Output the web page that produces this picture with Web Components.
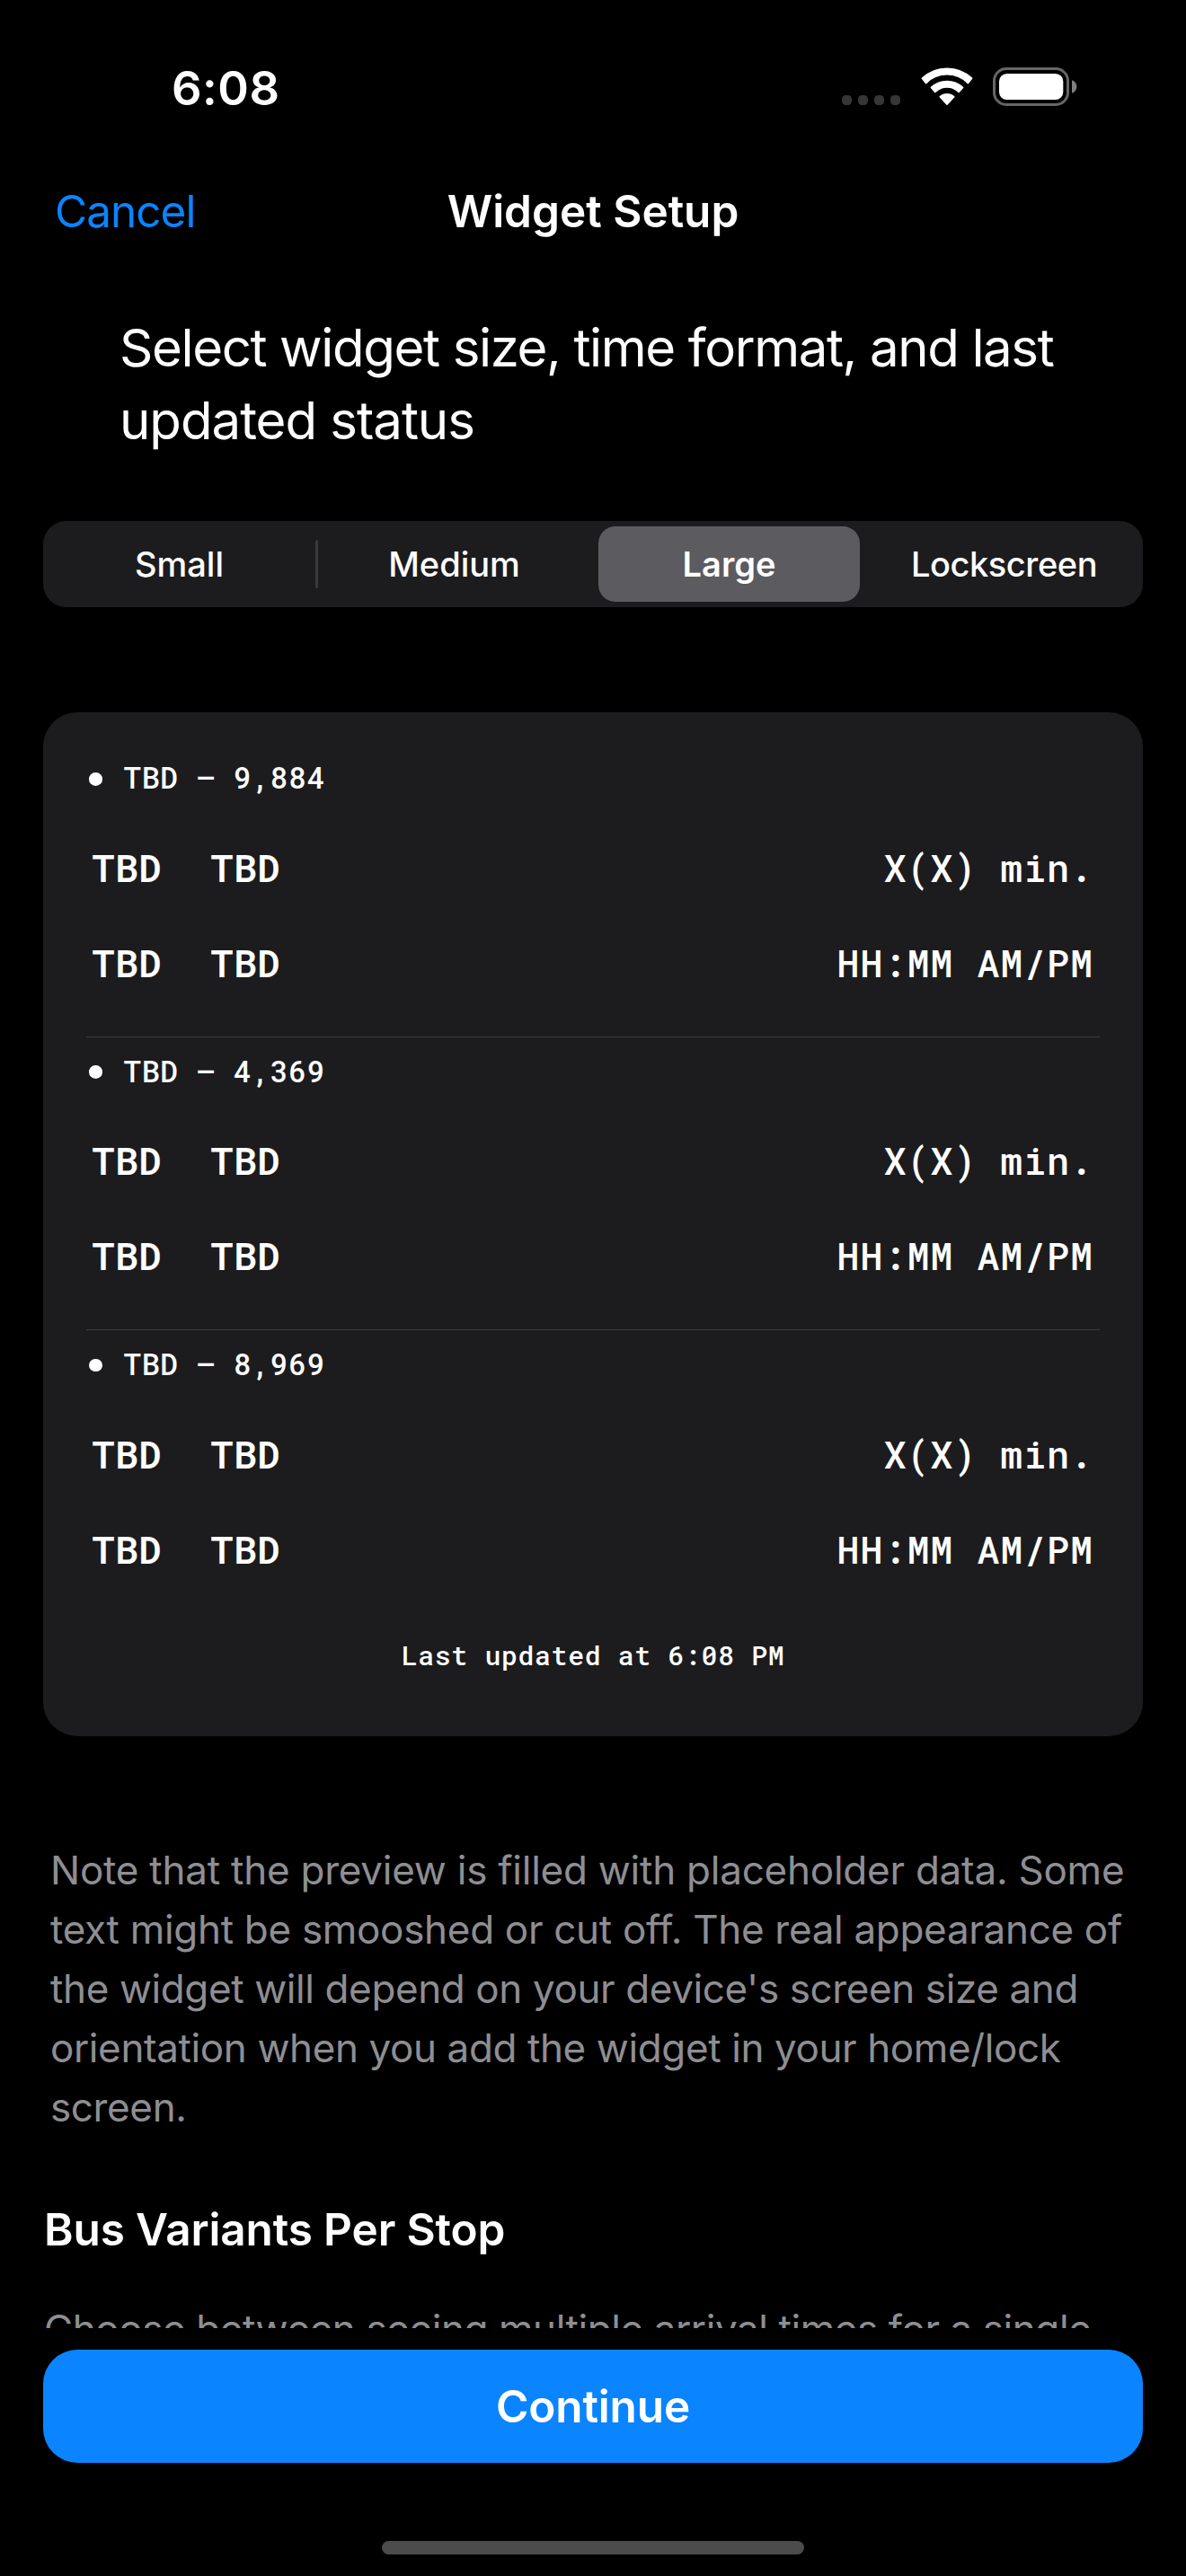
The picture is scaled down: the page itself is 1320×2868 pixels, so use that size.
<!DOCTYPE html>
<html lang="en">
<head>
<meta charset="utf-8">
<title>Widget Setup</title>
<style>
  html, body { margin: 0; background: #000; }
  body { width: 1320px; height: 2868px; overflow: hidden; }
</style>
</head>
<body>
<widget-setup-screen></widget-setup-screen>

<script>
const define = (name, html) => {
  customElements.define(name, class extends HTMLElement {
    connectedCallback() {
      if (this.shadowRoot) return;
      const t = document.createElement('template');
      t.innerHTML = typeof html === 'function' ? html(this) : html;
      this.attachShadow({ mode: 'open' }).append(t.content.cloneNode(true));
    }
  });
};

// One line of text; the tracking attribute sets its letter spacing in px.
define('text-line', el => `
  <style>
    :host { display: block; white-space: nowrap; letter-spacing: ${el.getAttribute('tracking') || 0}px; }
  </style><slot></slot>`);

define('status-bar', `
  <style>
    :host { display: flex; align-items: flex-start; height: 139px; padding: 66px 121px 0 191px; }
    .time { font-weight: 600; font-size: 52.5px; line-height: 64px; letter-spacing: .5px; }
    .icons { display: flex; align-items: flex-start; margin: 9px 0 0 auto; }
    svg { display: block; }
    .dots { display: flex; gap: 7px; padding-top: 31px; margin-right: 23px; }
    .dots i { width: 11px; height: 11px; border-radius: 4.5px; background: #363636; }
    .wifi { margin-right: 22px; }
  </style>
  <span class="time">6:08</span>
  <div class="icons">
    <div class="dots"><i></i><i></i><i></i><i></i></div>
    <svg class="wifi" width="58" height="43" viewBox="0 0 58 43" fill="#fff" stroke="#fff" stroke-width="1.6" stroke-linejoin="round">
      <path d="M1.4 12.2A40.2 40.2 0 0 1 56.6 12.2L52.4 17.6A32.8 32.8 0 0 0 5.6 17.6Z" />
      <path d="M11.4 22.4A25.9 25.9 0 0 1 46.6 22.4L42.1 27.5A18.5 18.5 0 0 0 15.9 27.5Z" />
      <path d="M21.2 32.8A11.5 11.5 0 0 1 36.8 32.8L29 41.1Z" />
    </svg>
    <svg width="94" height="43" viewBox="0 0 94 43">
      <rect x="1.5" y="1.5" width="82" height="40" rx="13.5" fill="none" stroke="#666" stroke-width="3"/>
      <rect x="7" y="7" width="71.3" height="29" rx="8.6" fill="#fff"/>
      <path d="M88 14.3C91 15.2 93.3 18 93.3 21.5S91 27.8 88 28.7Z" fill="#808080"/>
    </svg>
  </div>`);

define('nav-bar', `
  <style>
    :host { display: grid; grid-template-columns: 1fr auto 1fr; height: 60px; padding: 0 61px;
            font-size: 49.5px; line-height: 60px; }
    .action { color: #0a84ff; letter-spacing: -.97px; }
    .title { font-weight: 600; }
  </style>
  <span class="action"><slot name="action"></slot></span>
  <span class="title"><slot></slot></span>
  <span></span>`);

define('segmented-control', `
  <style>
    :host { display: grid; grid-template-columns: 303px 309px 303px 309px; height: 96px; margin: 71px 48px 0;
            border-radius: 26px; background: #1c1c1e; }
  </style><slot></slot>`);

define('segment-item', `
  <style>
    :host { display: flex; align-items: center; height: 96px; font-weight: 500; font-size: 38px; line-height: 48px; }
    .label { flex: 1; display: flex; justify-content: center; align-items: center; height: 84px; border-radius: 19px; }
    :host([divided])::before { content: ""; width: 3px; height: 54px; margin-right: -3px; border-radius: 1.5px; background: #3a3a3d; }
    :host([selected]) .label { margin: 0 6px; background: #5b5b60; font-weight: 600; }
  </style>
  <div class="label"><slot></slot></div>`);

define('arrival-row', el => `
  <style>
    :host { display: flex; height: 60px; padding: 0 7px 0 6.5px; font-size: 41.7px; line-height: 60px; letter-spacing: .93px; }
    b { font-weight: 600; width: 132px; }
    span { margin-left: auto; }
  </style>
  <b>TBD</b><b>TBD</b><span>${el.getAttribute('time')}</span>`);

define('stop-group', el => `
  <style>
    :host { display: block; }
    header { display: flex; align-items: center; box-sizing: border-box; height: 40px; padding: 1.5px 0 0 3px;
             font-size: 32.7px; line-height: 40px; letter-spacing: .8px; }
    header i { width: 14.6px; height: 14.6px; margin: 2.5px 23.9px 0 0; border-radius: 50%; background: #fff; }
    .rows { display: grid; gap: 46px; margin-top: 50.7px; }
    :host(:not([last])) .rows { padding-bottom: 51.7px; margin-bottom: 17px; border-bottom: 1px solid #3d3d40; }
  </style>
  <header><i></i>TBD – ${el.getAttribute('stop')}</header>
  <div class="rows">
    <arrival-row time="X(X) min."></arrival-row>
    <arrival-row time="HH:MM AM/PM"></arrival-row>
  </div>`);

define('widget-preview', `
  <style>
    :host { display: block; box-sizing: border-box; height: 1140px; margin: 117px 48px 0; padding: 52.4px 48px 0;
            border-radius: 38px; background: #1c1c1e;
            font-family: "Roboto Mono", "DejaVu Sans Mono", monospace; font-weight: 500; }
    footer { margin-top: 68.4px; text-align: center; font-size: 29.8px; line-height: 40px; letter-spacing: .67px; }
  </style>
  <slot></slot>
  <footer><slot name="footer"></slot></footer>`);

define('primary-button', `
  <style>
    :host { display: flex; align-items: center; justify-content: center; height: 126px; margin: 24px 48px 0;
            border-radius: 38px; background: #0a84ff; font-weight: 600; font-size: 49.5px; line-height: 60px; letter-spacing: -.13px; }
  </style><slot></slot>`);

define('home-indicator', `
  <style>:host { display: block; width: 470px; height: 15px; margin: 87px auto 0; border-radius: 7.5px; background: #4c4c4c; }</style>`);

define('widget-setup-screen', `
  <style>
    :host { display: flex; flex-direction: column; width: 1320px; height: 2868px; background: #000; color: #fff;
            font-family: Inter, "Liberation Sans", sans-serif; }
    main { height: 2327px; overflow: hidden; }
    .heading { margin: 82px 0 0 133px; font-size: 58.2px; line-height: 81px; }
    .note { margin: 116px 0 0 56px; color: #8e8e93; font-size: 44px; line-height: 66px; }
    .section { margin: 73px 0 0 49px; font-size: 49.5px; font-weight: 600; line-height: 60px; }
    .detail { margin: 48px 0 0 49px; color: #8e8e93; font-size: 44px; line-height: 66px; }
  </style>
  <status-bar></status-bar>
  <nav-bar><span slot="action">Cancel</span>Widget Setup</nav-bar>
  <main>
    <div class="heading">
      <text-line tracking="-1.4">Select widget size, time format, and last</text-line>
      <text-line tracking="-1.05">updated status</text-line>
    </div>
    <segmented-control>
      <segment-item>Small</segment-item>
      <segment-item divided>Medium</segment-item>
      <segment-item selected>Large</segment-item>
      <segment-item><text-line tracking="-0.43">Lockscreen</text-line></segment-item>
    </segmented-control>
    <widget-preview>
      <stop-group stop="9,884"></stop-group>
      <stop-group stop="4,369"></stop-group>
      <stop-group stop="8,969" last></stop-group>
      <span slot="footer">Last updated at 6:08 PM</span>
    </widget-preview>
    <div class="note">
      <text-line tracking="-0.24">Note that the preview is filled with placeholder data. Some</text-line>
      <text-line tracking="-0.31">text might be smooshed or cut off. The real appearance of</text-line>
      <text-line tracking="-0.39">the widget will depend on your device's screen size and</text-line>
      <text-line tracking="-0.39">orientation when you add the widget in your home/lock</text-line>
      <text-line tracking="-0.37">screen.</text-line>
    </div>
    <text-line class="section" tracking="-0.13">Bus Variants Per Stop</text-line>
    <text-line class="detail" tracking="-0.42">Choose between seeing multiple arrival times for a single</text-line>
  </main>
  <primary-button>Continue</primary-button>
  <home-indicator></home-indicator>`);
</script>
</body>
</html>
